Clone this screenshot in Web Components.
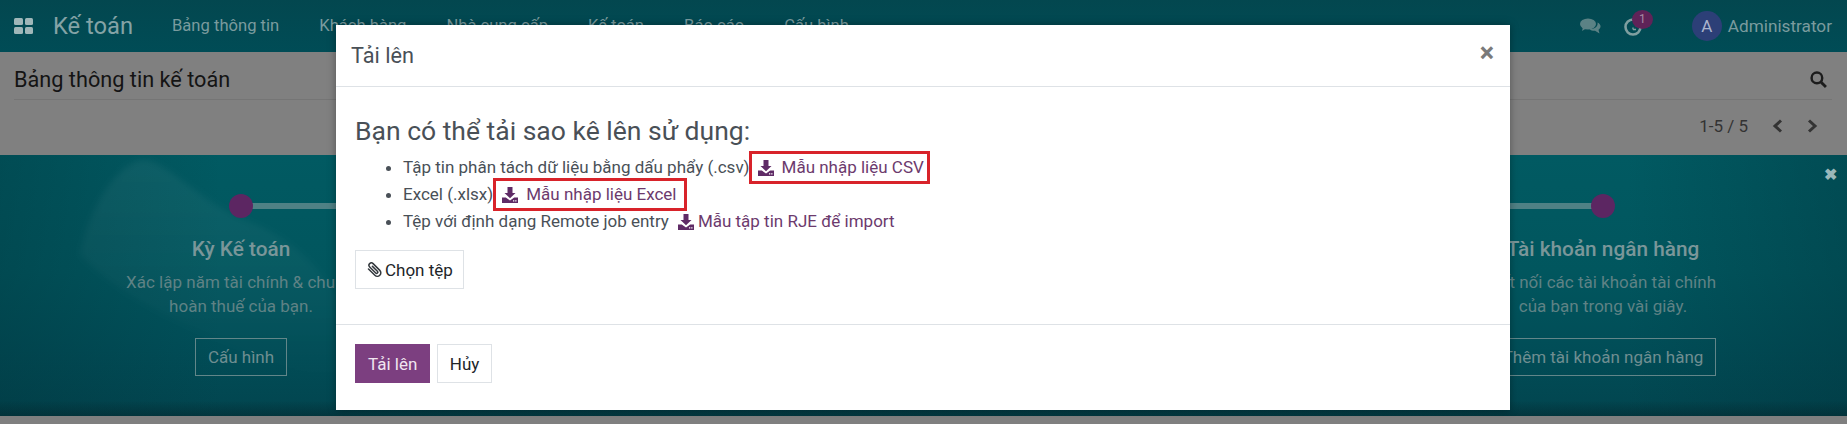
<!DOCTYPE html>
<html lang="vi">
<head>
<meta charset="utf-8">
<title>Tải lên</title>
<style>
  html, body { margin: 0; height: 424px; overflow: hidden; background: #7f7f7f; }
  body { font-family: Roboto, "Liberation Sans", sans-serif; font-size: 17px; position: relative; }
</style>
</head>
<body>
<o-page>
  <o-navbar></o-navbar>
  <o-control-panel></o-control-panel>
  <o-banner>
    <o-step title="Kỳ Kế toán" action="Cấu hình" line="right">Xác lập năm tài chính &amp; chu kỳ<br>hoàn thuế của bạn.</o-step>
    <o-step line="both"></o-step>
    <o-step line="both"></o-step>
    <o-step title="Tài khoản ngân hàng" action="Thêm tài khoản ngân hàng" line="left">Kết nối các tài khoản tài chính<br>của bạn trong vài giây.</o-step>
  </o-banner>
</o-page>
<o-dialog heading="Tải lên">
  <h3>Bạn có thể tải sao kê lên sử dụng:</h3>
  <ul>
    <li>Tập tin phân tách dữ liệu bằng dấu phẩy (.csv)<o-template-link marked style="margin-left:2px;--end-pad:3px">Mẫu nhập liệu CSV</o-template-link></li>
    <li>Excel (.xlsx)<o-template-link marked style="margin-left:3px;--end-pad:7px">Mẫu nhập liệu Excel</o-template-link></li>
    <li>Tệp với định dạng Remote job entry<o-template-link style="margin-left:9px">Mẫu tập tin RJE để import</o-template-link></li>
  </ul>
  <o-btn slot="file" clip>Chọn tệp</o-btn>
  <o-btn slot="footer" primary>Tải lên</o-btn>
  <o-btn slot="footer">Hủy</o-btn>
</o-dialog>

<script>
'use strict';

// ── Base ─────────────────────────────────────────────────────
class BaseEl extends HTMLElement {
  connectedCallback() {
    if (this.shadowRoot) return;
    this.attachShadow({ mode: 'open' }).innerHTML = `<style>${this.styles()}</style>${this.markup()}`;
  }
  styles() { return ':host{display:block}'; }
  markup() { return '<slot></slot>'; }
}

const ICONS = {
  download: '<svg width="16" height="16" viewBox="0 0 16 16"><path fill="currentColor" d="M5.500 0h5v6h3L8 11.300 2.500 6h3z"/><path fill="currentColor" fill-rule="evenodd" d="M0 10.500h3.800L8 13.600l4.200-3.100H16V16H0zM11 13.300v1.200h1.300v-1.200zm2.200 0v1.200h1.300v-1.200z"/></svg>',
  clip: '<svg width="15" height="16" viewBox="0 0 15 16"><g transform="rotate(-45 7.500 8)"><path fill="none" stroke="currentColor" stroke-width="1.500" stroke-linecap="round" d="M4 3v9a3.500 3.500 0 0 0 7 0V2.500a2.400 2.400 0 0 0-4.800 0V11a1.200 1.200 0 0 0 2.400 0V4"/></g></svg>',
};

// ── Page shell ───────────────────────────────────────────────
class OPage extends BaseEl {
  styles() { return ':host{display:flex;flex-direction:column;height:416px}'; }
}

class ONavbar extends BaseEl {
  styles() {
    return `:host{display:flex;align-items:center;height:52px;background:linear-gradient(#03474f,#004c56);color:#7a9b9e;font-size:16.6px;padding:0 15px 0 14px;box-sizing:border-box}
      .apps{width:19px;height:16px;display:grid;grid-template-columns:1fr 1fr;gap:2px;margin-right:20px}
      .apps i{background:#9fb7b9;border-radius:1.5px}
      .brand{font-size:23.7px;color:#84a3a6;margin-right:39px}
      nav{display:flex;gap:40px;margin-top:-2px}
      .end{margin-left:auto;display:flex;align-items:center}
      .bell{position:relative;width:18px;height:18px;margin:2px 50px 0 23px;color:#7f9fa0}
      .badge{position:absolute;left:8px;top:-8px;width:21px;height:19px;border-radius:50%;background:#5f2358;color:#a88aa4;font-size:12px;line-height:19px;text-align:center}
      .avatar{width:30px;height:30px;border-radius:50%;background:#2c3f77;color:#a9b3cd;font-size:17px;line-height:30px;text-align:center;margin-right:6px}`;
  }
  markup() {
    return `<div class="apps"><i></i><i></i><i></i><i></i></div>
      <div class="brand">Kế toán</div>
      <nav><span>Bảng thông tin</span><span>Khách hàng</span><span>Nhà cung cấp</span><span>Kế toán</span><span>Báo cáo</span><span>Cấu hình</span></nav>
      <div class="end">
        <svg width="21" height="16" viewBox="0 0 21 16"><ellipse cx="8" cy="6" rx="8" ry="5.600" fill="#5b8285"/><path d="M3 9l-1 4 4-2.500z" fill="#5b8285"/><path d="M17.500 4.500c2 1 3.500 2.700 3 4.600-.3 1.200-1 2-2 2.700l1 3.700-4.500-2.800c-2 .2-4-.4-5.500-1.500 4.500 0 9-2.500 8-6.700z" fill="#5b8285"/></svg>
        <div class="bell">
          <svg width="18" height="18" viewBox="0 0 18 18"><circle cx="9" cy="9" r="7.500" fill="none" stroke="currentColor" stroke-width="2.600"/><path d="M9 11.500h3M9 11.500V9.500" stroke="currentColor" stroke-width="1.400"/></svg>
          <span class="badge">1</span>
        </div>
        <div class="avatar">A</div>
        <span style="font-size:17.2px">Administrator</span>
      </div>`;
  }
}

class OControlPanel extends BaseEl {
  styles() {
    return `:host{display:block;height:103px;background:#808080;box-sizing:border-box;padding:0 15px 0 14px;color:#111}
      .top{display:flex;align-items:center;height:48px;padding-top:8px;border-bottom:1px solid #757575;box-sizing:border-box;font-size:21.7px;color:#141414}
      .top svg{margin-left:auto;margin-right:5px}
      .bottom{display:flex;align-items:center;justify-content:flex-end;height:51px;font-size:17px;color:#333;padding-right:14px}
      .bottom svg{margin-left:24px}`;
  }
  markup() {
    return `<div class="top"><span>Bảng thông tin kế toán</span>
        <svg width="17" height="17" viewBox="0 0 16 16"><circle cx="6.500" cy="6.500" r="5" fill="none" stroke="#1c1c1c" stroke-width="2.300"/><path d="M10.500 10.500 15 15" stroke="#1c1c1c" stroke-width="2.700"/></svg></div>
      <div class="bottom"><span>1-5 / 5</span>
        <svg width="11" height="14" viewBox="0 0 11 14"><path d="M9 1.500 3 7l6 5.500" fill="none" stroke="#333" stroke-width="3"/></svg>
        <svg width="11" height="14" viewBox="0 0 11 14"><path d="M2 1.500 8 7l-6 5.500" fill="none" stroke="#333" stroke-width="3"/></svg></div>`;
  }
}

class OBanner extends BaseEl {
  styles() {
    return `:host{display:block;position:relative;height:261px;overflow:hidden;background:
        linear-gradient(transparent 94%,rgba(3,40,46,.55) 100%),
        linear-gradient(90deg,rgba(0,50,58,.35),transparent 12%,transparent 88%,rgba(0,50,58,.35)),
        linear-gradient(#015a62 0,#01565e 45%,#014d57 75%,#02454f 100%)}
      svg.bg{position:absolute;left:0;top:0}
      .steps{position:relative;display:grid;grid-template-columns:repeat(4,454px);padding-left:14px}
      .close{position:absolute;right:10px;top:11px;color:#9ab8ba;font-size:16px;font-weight:700;line-height:18px}`;
  }
  markup() {
    return `<svg class="bg" width="1847" height="261" viewBox="0 0 1847 261"><defs><linearGradient id="hump" x1="0" y1="0" x2="0" y2="1"><stop offset="0" stop-color="#fff" stop-opacity=".05"/><stop offset="1" stop-color="#fff" stop-opacity="0"/></linearGradient><filter id="soft"><feGaussianBlur stdDeviation="3"/></filter></defs><path d="M80 100C88 55 118 5 145 5c22 2 60 45 100 60 40 15 70 40 91 75v90C260 200 150 170 80 100z" fill="url(#hump)" filter="url(#soft)"/></svg>
      <div class="steps"><slot></slot></div><span class="close">✖</span>`;
  }
}

class OStep extends BaseEl {
  styles() {
    return `:host{display:block;position:relative;text-align:center;padding-top:39px;height:222px;color:#5f8285}
      .dot{width:24px;height:24px;border-radius:50%;background:#5c2662;margin:0 auto;position:relative}
      .line{position:absolute;top:48px;height:6px;background:#4f8185}
      .line.r{left:50%;right:0}.line.l{left:0;right:50%}
      h4{margin:17px 0 0;font:500 20.8px/28px Roboto,sans-serif;color:#7a9699}
      p{margin:7px 0 0;font-size:17px;line-height:24px;white-space:nowrap}
      .btn{display:inline-block;margin-top:20px;height:38px;box-sizing:border-box;border:1px solid #628689;padding:0 12px;line-height:36px;font-size:17px;color:#6f8e91}`;
  }
  markup() {
    const line = this.getAttribute('line');
    const title = this.getAttribute('title');
    const action = this.getAttribute('action');
    return `${line === 'right' || line === 'both' ? '<div class="line r"></div>' : ''}
      ${line === 'left' || line === 'both' ? '<div class="line l"></div>' : ''}
      <div class="dot"></div>
      ${title ? `<h4>${title}</h4><p><slot></slot></p><span class="btn">${action}</span>` : ''}`;
  }
}

// ── Dialog ───────────────────────────────────────────────────
class ODialog extends BaseEl {
  styles() {
    return `:host{display:flex;flex-direction:column;position:absolute;left:336px;top:25px;width:1174px;height:385px;background:#fff;box-shadow:0 0 8px rgba(0,0,0,.35);color:#495057}
      header{display:flex;align-items:center;justify-content:space-between;height:62px;padding:0 15px;border-bottom:1px solid #dee2e6;box-sizing:border-box;font-size:21.7px}
      .x{font-size:27px;font-weight:700;color:#7a7a7a;line-height:24px;margin:-6px 1px 0 0}
      main{padding:29px 19px 0;height:237px;box-sizing:border-box}
      .file{display:block;margin-top:15px}
      footer{display:flex;gap:7px;padding:19px 19px 0;border-top:1px solid #dee2e6;flex:1}
      ::slotted(h3){margin:0;font:400 26.5px/30px Roboto,sans-serif;color:#495057}
      ::slotted(ul){margin:8px 0 0;padding:0 0 0 48px;line-height:27px;font-size:17px}`;
  }
  markup() {
    return `<header><span>${this.getAttribute('heading')}</span><span class="x">×</span></header>
      <main><slot></slot><slot class="file" name="file"></slot></main>
      <footer><slot name="footer"></slot></footer>`;
  }
}

class OTemplateLink extends BaseEl {
  styles() {
    return `:host{display:inline-flex;align-items:center;color:#6c3a6d;line-height:27px;vertical-align:top}
      .icon{display:inline-flex;color:#5f2b66}
      :host([marked]) .wrap{outline:3px solid #d8232a;outline-offset:0;padding:0 var(--end-pad,3px) 0 6px}
      :host([marked]) .icon{margin-right:8px}
      :host(:not([marked])) .icon{margin-right:4px}
      .wrap{display:inline-flex;align-items:center}`;
  }
  markup() {
    return `<span class="wrap"><span class="icon">${ICONS.download}</span><slot></slot></span>`;
  }
}

class OBtn extends BaseEl {
  styles() {
    return `:host{display:inline-flex;align-items:center;height:39px;box-sizing:border-box;border:1px solid #dee2e6;background:#fff;color:#212529;padding:0 11.5px;font-size:17px;vertical-align:top}
      :host([primary]){background:#7c3f80;border-color:#7c3f80;color:#f0e6f0;padding:0 12px}
      :host([clip]){padding:0 10px 0 11px}
      svg{margin-right:3px;color:#33383d}`;
  }
  markup() {
    return `${this.hasAttribute('clip') ? ICONS.clip : ''}<slot></slot>`;
  }
}

customElements.define('o-page', OPage);
customElements.define('o-navbar', ONavbar);
customElements.define('o-control-panel', OControlPanel);
customElements.define('o-banner', OBanner);
customElements.define('o-step', OStep);
customElements.define('o-dialog', ODialog);
customElements.define('o-template-link', OTemplateLink);
customElements.define('o-btn', OBtn);
</script>
</body>
</html>
